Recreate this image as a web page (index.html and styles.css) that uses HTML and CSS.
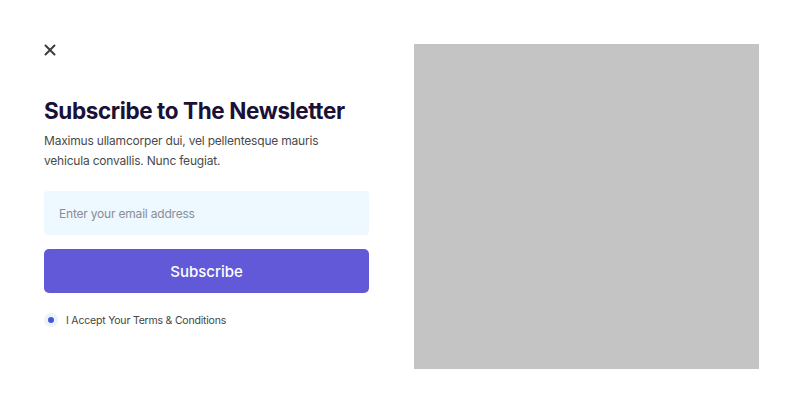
FILE: index.html
```html
<!DOCTYPE html>
<html lang="en">
<head>
<meta charset="utf-8">
<title>Subscribe to The Newsletter</title>
<link rel="stylesheet" href="styles.css">
</head>
<body>
<div class="modal">
  <div class="content">
    <button class="close" aria-label="Close">
      <svg width="12" height="12" viewBox="0 0 12 12"><path d="M1.5 1.5L10.5 10.5M10.5 1.5L1.5 10.5" stroke="#3d3d3d" stroke-width="2" stroke-linecap="round"/></svg>
    </button>
    <h1 class="title">Subscribe to The Newsletter</h1>
    <p class="desc">Maximus ullamcorper dui, vel pellentesque mauris vehicula convallis. Nunc feugiat.</p>
    <div class="email">Enter your email address</div>
    <button class="submit">Subscribe</button>
    <label class="accept">
      <span class="radio"><span class="dot"></span></span>
      <span class="accept-text">I Accept Your Terms &amp; Conditions</span>
    </label>
  </div>
  <div class="image"></div>
</div>
</body>
</html>
```
FILE: styles.css
```css
* { box-sizing: border-box; }
html, body { margin: 0; padding: 0; background: #ffffff; }
body { font-family: "Inter", "Noto Sans", sans-serif; }
.modal {
  display: flex;
  padding: 44px 41px 0 44px;
  gap: 45px;
}
.content {
  width: 325px;
  display: flex;
  flex-direction: column;
}
.close {
  border: 0;
  background: none;
  padding: 0;
  width: 12px;
  height: 12px;
  display: block;
  cursor: pointer;
}
.close svg { display: block; }
.title {
  margin: 40px 0 0 0;
  font-size: 22.5px;
  font-weight: 700;
  color: #1b1137;
  letter-spacing: -0.4px;
  line-height: 30px;
}
.desc {
  margin: 5px 0 0 0;
  max-width: 290px;
  font-size: 12px;
  line-height: 20px;
  color: #4a4a4a;
  letter-spacing: -0.2px;
}
.email {
  margin-top: 20px;
  height: 44px;
  background: #eef8ff;
  border-radius: 4px;
  padding: 0 15px;
  display: flex;
  align-items: center;
  font-size: 12px;
  color: #8a8e95;
  letter-spacing: -0.2px;
}
.submit {
  margin-top: 14px;
  height: 44px;
  border: 0;
  border-radius: 5px;
  background: #6259d8;
  color: #ffffff;
  font-family: inherit;
  font-size: 15px;
  font-weight: 500;
  cursor: pointer;
}
.accept {
  margin-top: 20px;
  display: flex;
  align-items: center;
  gap: 8px;
}
.radio {
  width: 14px;
  height: 14px;
  border-radius: 50%;
  background: #eef2fb;
  display: flex;
  align-items: center;
  justify-content: center;
}
.dot {
  width: 6px;
  height: 6px;
  border-radius: 50%;
  background: #3b5bdb;
}
.accept-text {
  font-size: 10.5px;
  color: #444444;
  letter-spacing: -0.2px;
}
.image {
  width: 345px;
  height: 325px;
  background: #c4c4c4;
}
```
